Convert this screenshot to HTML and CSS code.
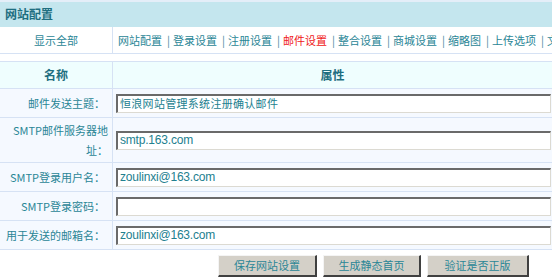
FILE: index.html
```html
<!DOCTYPE html>
<html>
<head>
<meta charset="utf-8">
<link rel="stylesheet" href="styles.css">
</head>
<body>
<div class="page">
  <div class="title">网站配置</div>
  <div class="navrow">
    <div class="navleft">显示全部</div>
    <div class="navlinks">
      <span>网站配置</span><span class="sep">|</span><span>登录设置</span><span class="sep">|</span><span>注册设置</span><span class="sep">|</span><span class="active">邮件设置</span><span class="sep">|</span><span>整合设置</span><span class="sep">|</span><span>商城设置</span><span class="sep">|</span><span>缩略图</span><span class="sep">|</span><span>上传选项</span><span class="sep">|</span><span>文件</span>
    </div>
  </div>
  <div class="grid">
    <div class="hcell hleft">名称</div>
    <div class="hcell">属性</div>
    <div class="lcell r1">邮件发送主题：</div>
    <div class="vcell r1"><div class="input">恒浪网站管理系统注册确认邮件</div></div>
    <div class="lcell r2">SMTP邮件服务器地<br>址：</div>
    <div class="vcell r2"><div class="input latin">smtp.163.com</div></div>
    <div class="lcell r3">SMTP登录用户名：</div>
    <div class="vcell r3"><div class="input latin">zoulinxi@163.com</div></div>
    <div class="lcell r3">SMTP登录密码：</div>
    <div class="vcell r3"><div class="input latin"></div></div>
    <div class="lcell r3">用于发送的邮箱名：</div>
    <div class="vcell r3"><div class="input latin">zoulinxi@163.com</div></div>
  </div>
  <div class="buttons">
    <div class="btn b1">保存网站设置</div>
    <div class="btn b2">生成静态首页</div>
    <div class="btn b3">验证是否正版</div>
  </div>
</div>
</body>
</html>
```

FILE: styles.css
```css
* { box-sizing: border-box; }
html, body { margin: 0; padding: 0; background: #fff; }
body {
  font-family: "Noto Sans CJK SC", "Liberation Sans", sans-serif;
  font-size: 11px;
  color: #22808f;
  width: 552px;
  height: 277px;
  overflow: hidden;
}
.page { width: 552px; }
.title {
  height: 27px;
  background: #c4e6ee;
  border-top: 2px solid #e4eef8;
  font-weight: bold;
  color: #1e6e80;
  padding-left: 5px;
  line-height: 24px;
  font-size: 12px;
}
.navrow {
  display: flex;
  height: 27px;
  border-bottom: 1px solid #d6e2f4;
  background: #fff;
}
.navleft {
  width: 113px;
  flex: none;
  border-right: 1px solid #d6e2f4;
  text-align: center;
  line-height: 26px;
  color: #2a8696;
}
.navlinks {
  white-space: nowrap;
  overflow: hidden;
  padding-left: 5px;
  line-height: 26px;
  color: #2a8696;
}
.navlinks .sep {
  display: inline-block;
  width: 11px;
  padding-left: 5px;
  color: #4a8a98;
}
.navlinks .active { color: #f02020; }
.grid {
  margin-top: 7px;
  display: grid;
  grid-template-columns: 113px 439px;
  border-top: 1px solid #d6e2f4;
}
.hcell {
  height: 27px;
  background: #effefe;
  border-bottom: 1px solid #d6e2f4;
  text-align: center;
  font-weight: bold;
  font-size: 12px;
  color: #1e6e80;
  line-height: 26px;
}
.hleft, .lcell { border-right: 1px solid #d6e2f4; }
.lcell {
  background: #f5f9ff;
  border-bottom: 1px solid #d6e2f4;
  text-align: right;
  padding-right: 7px;
  display: flex;
  align-items: center;
  justify-content: flex-end;
  color: #2a8696;
  line-height: 20px;
  white-space: nowrap;
}
.lcell.r2 { padding-right: 4px; }
.vcell {
  background: #f5f9ff;
  border-bottom: 1px solid #d6e2f4;
  display: flex;
  align-items: center;
  padding-left: 3px;
}
.r1 { height: 29px; }
.r2 { height: 45px; }
.r3 { height: 29px; }
.input {
  width: 435px;
  height: 19px;
  background: #fff;
  border-top: 2px solid #6a6a6a;
  border-left: 2px solid #6a6a6a;
  border-right: 1px solid #dcdad2;
  border-bottom: 1px solid #dcdad2;
  color: #22808f;
  font-size: 11px;
  letter-spacing: 0.3px;
  line-height: 15px;
  padding-left: 2px;
  white-space: nowrap;
}
.input.latin { font-family: "Liberation Sans", sans-serif; font-size: 12px; letter-spacing: -0.2px; }
.buttons {
  display: flex;
  gap: 6px;
  padding-left: 218px;
  margin-top: 5px;
}
.btn {
  height: 22px;
  background: #d4d0c8;
  border-top: 1px solid #f4f4f4;
  border-left: 1px solid #f4f4f4;
  border-right: 2px solid #404040;
  border-bottom: 2px solid #404040;
  text-align: center;
  line-height: 19px;
  color: #2a8696;
}
.b1 { width: 99px; }
.b2 { width: 98px; }
.b3 { width: 102px; }
```
